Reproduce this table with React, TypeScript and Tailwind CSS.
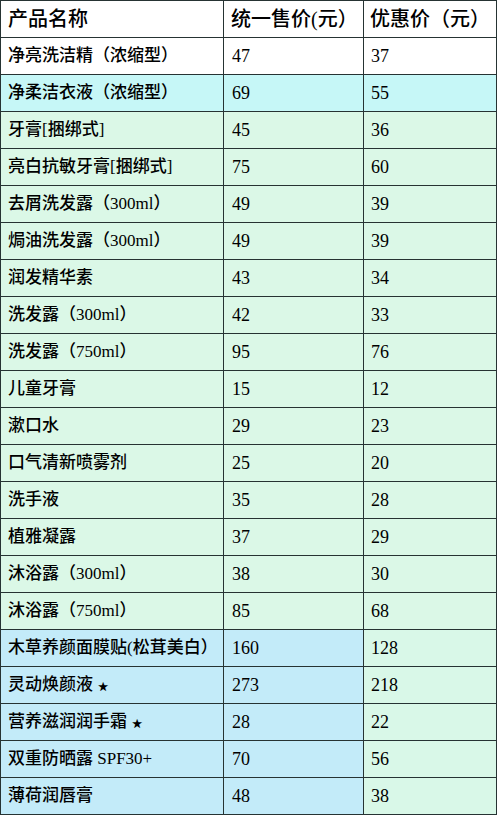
import React from "react";

type Row = { name: React.ReactNode; a: string; b: string; kind: "w" | "c" | "g" | "b" };

const S = () => (
  <span className="text-[26px] leading-none font-['DejaVu_Sans',sans-serif] ml-[2px] relative top-[1px]">⋆</span>
);

const rows: Row[] = [
  { name: "净亮洗洁精（浓缩型）", a: "47", b: "37", kind: "w" },
  { name: "净柔洁衣液（浓缩型）", a: "69", b: "55", kind: "c" },
  { name: "牙膏[捆绑式]", a: "45", b: "36", kind: "g" },
  { name: "亮白抗敏牙膏[捆绑式]", a: "75", b: "60", kind: "g" },
  { name: "去屑洗发露（300ml）", a: "49", b: "39", kind: "g" },
  { name: "焗油洗发露（300ml）", a: "49", b: "39", kind: "g" },
  { name: "润发精华素", a: "43", b: "34", kind: "g" },
  { name: "洗发露（300ml）", a: "42", b: "33", kind: "g" },
  { name: "洗发露（750ml）", a: "95", b: "76", kind: "g" },
  { name: "儿童牙膏", a: "15", b: "12", kind: "g" },
  { name: "漱口水", a: "29", b: "23", kind: "g" },
  { name: "口气清新喷雾剂", a: "25", b: "20", kind: "g" },
  { name: "洗手液", a: "35", b: "28", kind: "g" },
  { name: "植雅凝露", a: "37", b: "29", kind: "g" },
  { name: "沐浴露（300ml）", a: "38", b: "30", kind: "g" },
  { name: "沐浴露（750ml）", a: "85", b: "68", kind: "g" },
  { name: "木草养颜面膜贴(松茸美白）", a: "160", b: "128", kind: "b" },
  { name: <>灵动焕颜液<S /></>, a: "273", b: "218", kind: "b" },
  { name: <>营养滋润润手霜<S /></>, a: "28", b: "22", kind: "b" },
  { name: "双重防晒露 SPF30+", a: "70", b: "56", kind: "b" },
  { name: "薄荷润唇膏", a: "48", b: "38", kind: "b" },
];

const bgFor = (kind: Row["kind"], col: number) => {
  if (kind === "w") return "bg-white";
  if (kind === "c") return "bg-[#c6f7f7]";
  if (kind === "b") return col < 2 ? "bg-[#c3ebf9]" : "bg-[#d9f8e8]";
  return "bg-[#dbf8e7]";
};

const cell = "h-[37px] border-b-[1.5px] border-[#263333] flex items-center overflow-hidden whitespace-nowrap";

export default function App() {
  return (
    <div className="w-[500px] h-[817px] bg-white font-['Liberation_Serif','Noto_Sans_CJK_SC',serif] font-medium text-black">
      <div className="w-[497px] border-t-[1.5px] border-l-[1.5px] border-r-[1.5px] border-[#263333] grid grid-cols-[223px_140px_1fr]">
        <div className={`${cell} bg-white pl-[7px] text-[20px] border-r-[1.5px]`}>产品名称</div>
        <div className={`${cell} bg-white pl-[7px] text-[20px] border-r-[1.5px]`}>统一售价(元）</div>
        <div className={`${cell} bg-white pl-[6px] text-[20px]`}>优惠价（元）</div>
        {rows.map((r, i) => (
          <React.Fragment key={i}>
            <div className={`${cell} ${bgFor(r.kind, 0)} pl-[7px] text-[17px] border-r-[1.5px]`}>{r.name}</div>
            <div className={`${cell} ${bgFor(r.kind, 1)} pl-[8px] text-[18px] border-r-[1.5px]`}>{r.a}</div>
            <div className={`${cell} ${bgFor(r.kind, 2)} pl-[7px] text-[18px]`}>{r.b}</div>
          </React.Fragment>
        ))}
      </div>
    </div>
  );
}
